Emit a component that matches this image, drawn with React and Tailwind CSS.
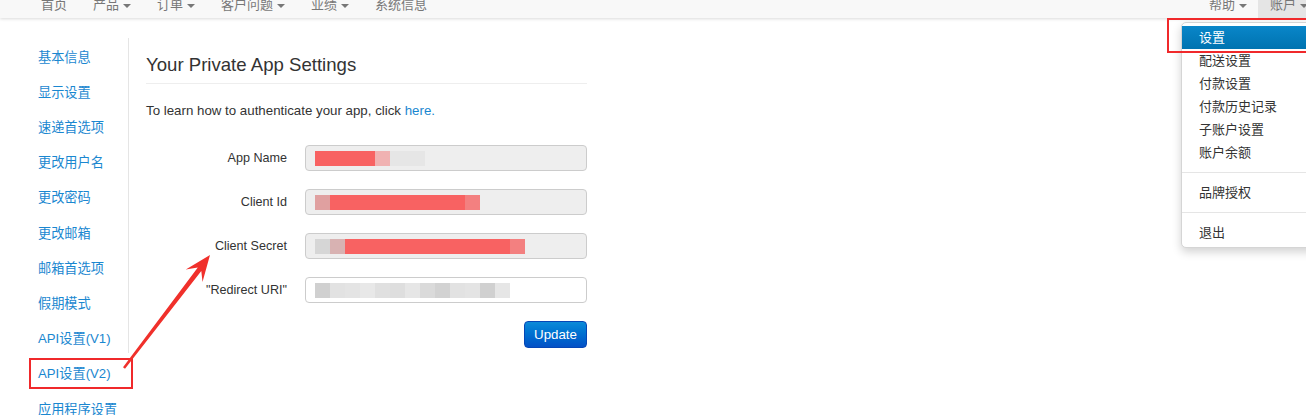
const FONT = "font-['Liberation_Sans','Noto_Sans_CJK_SC',sans-serif]"

const topLeft = [
  { label: '首页' },
  { label: '产品', caret: true },
  { label: '订单', caret: true },
  { label: '客户问题', caret: true },
  { label: '业绩', caret: true },
  { label: '系统信息' },
]

const sideLinks = [
  '基本信息', '显示设置', '速递首选项', '更改用户名', '更改密码', '更改邮箱',
  '邮箱首选项', '假期模式', 'API设置(V1)', 'API设置(V2)', '应用程序设置',
]

const uriBlocks = [
  '#d0d0d0', '#e2e2e2', '#e4e4e4', '#e8e8e8', '#e0e0e0', '#dedede', '#e6e6e6',
  '#dadada', '#d2d2d2', '#e2e2e2', '#e4e4e4', '#d0d0d0', '#e6e6e6',
]

function Caret() {
  return <span className="ml-[4px] mt-[2px] inline-block w-0 h-0 border-x-[4px] border-t-[4px] border-x-transparent border-t-[#777]" />
}

// smeared-out values in the screenshot
function Blocks({ items }) {
  return (
    <div className="flex h-[15px]">
      {items.map(([w, c], i) => (
        <div key={i} className="h-full" style={{ width: w, background: c }} />
      ))}
    </div>
  )
}

function Field({ label, disabled = true, children }) {
  return (
    <div className="flex items-center gap-[18px]">
      <div className="w-[141px] text-right text-[12.6px] text-[#333] pt-[1px]">{label}</div>
      <div
        className={`w-[282px] h-[26px] rounded-[4px] border border-[#ccc] pl-[9px] flex items-center ${
          disabled ? 'bg-[#eee]' : 'bg-white'
        }`}
      >
        {children}
      </div>
    </div>
  )
}

export default function App() {
  return (
    <div className={`relative w-[1306px] h-[415px] overflow-hidden bg-white ${FONT}`}>
      {/* top navbar, scrolled half out of view */}
      <div className="h-[18px] bg-[#f8f8f8] shadow-[0_1px_3px_rgba(0,0,0,0.15)] overflow-hidden flex text-[13px] text-[#777]">
        <div className="flex gap-[26px] ml-[41px] -mt-[8px] leading-[20px]">
          {topLeft.map((item) => (
            <div key={item.label} className="flex items-center">
              {item.label}
              {item.caret && <Caret />}
            </div>
          ))}
        </div>
        <div className="ml-auto flex">
          <div className="flex items-center -mt-[8px] leading-[20px] mr-[11px]">
            帮助<Caret />
          </div>
          <div className="w-[48px] bg-[#e5e5e5] pl-[12px] flex">
            <div className="flex items-center -mt-[8px] leading-[20px] whitespace-nowrap">
              账户<Caret />
            </div>
          </div>
        </div>
      </div>

      <div className="flex items-start mt-[20px]">
        {/* sidebar */}
        <div className="w-[128px] pl-[38px] pt-[2px] shrink-0">
          {sideLinks.map((s) => (
            <div key={s} className="h-[35.2px] flex items-center text-[13.2px] text-[#1a87d0] whitespace-nowrap">
              {s}
            </div>
          ))}
        </div>

        {/* settings form */}
        <div className="border-l border-[#e5e5e5] pl-[17px] pb-[5px]">
          <div className="w-[441px]">
            <h2 className="mt-[15px] pb-[6px] border-b border-[#eee] text-[18.6px] leading-[24px] text-[#333]">
              Your Private App Settings
            </h2>
            <p className="mt-[17px] mb-[-1px] text-[13.3px] leading-[20px] text-[#333]">
              To learn how to authenticate your app, click <span className="text-[#1a87d0]">here.</span>
            </p>

            <div className="mt-[25px] flex flex-col gap-[18px]">
              <Field label="App Name">
                <Blocks items={[[60, '#f86262'], [15, '#f0b2b2'], [35, '#e6e6e6']]} />
              </Field>
              <Field label="Client Id">
                <Blocks items={[[15, '#e0a0a0'], [135, '#f86262'], [15, '#f38080']]} />
              </Field>
              <Field label="Client Secret">
                <Blocks items={[[15, '#d6d6d6'], [15, '#d8b2b2'], [165, '#f86262'], [15, '#f38080']]} />
              </Field>
              <Field label={'"Redirect URI"'} disabled={false}>
                <Blocks items={uriBlocks.map((c) => [15, c])} />
              </Field>
            </div>

            <div className="mt-[18px] flex justify-end">
              <button className="w-[63px] h-[27px] rounded-[4px] border border-[#0546b5] bg-gradient-to-b from-[#0c8ad8] to-[#0450c6] text-white text-[13.3px]">
                Update
              </button>
            </div>
          </div>
        </div>
      </div>

      {/* account dropdown */}
      <div className="absolute left-[1181px] top-[22px] w-[160px] h-[226px] bg-white border border-[#d5d5d5] rounded-[5px] shadow-[0_4px_10px_rgba(0,0,0,0.18)] pt-[3px] text-[13px] text-[#333]">
        <div className="h-[23px] pl-[17px] flex items-center text-white bg-gradient-to-b from-[#0a86c9] to-[#0073b0]">设置</div>
        {['配送设置', '付款设置', '付款历史记录', '子账户设置', '账户余额'].map((s) => (
          <div key={s} className="h-[23px] pl-[17px] flex items-center">{s}</div>
        ))}
        <div className="mt-[8px] mb-[8px] h-px bg-[#e5e5e5]" />
        <div className="h-[23px] pl-[17px] flex items-center">品牌授权</div>
        <div className="mt-[8px] mb-[8px] h-px bg-[#e5e5e5]" />
        <div className="h-[23px] pl-[17px] flex items-center">退出</div>
      </div>

      {/* annotation boxes */}
      <div className="absolute left-[1167px] top-[18px] w-[160px] h-[35px] border-2 border-[#f0292b]" />
      <div className="absolute left-[29px] top-[358px] w-[104px] h-[31px] border-2 border-[#f0292b]" />

      {/* annotation arrow */}
      <svg className="absolute left-0 top-0 pointer-events-none" width="1306" height="415">
        <polygon
          fill="#f0302b"
          points="125.0,368.7 201.3,270.9 202.5,282.0 210,255 185.8,269.5 197.8,267.5 123.0,367.3"
        />
      </svg>
    </div>
  )
}
